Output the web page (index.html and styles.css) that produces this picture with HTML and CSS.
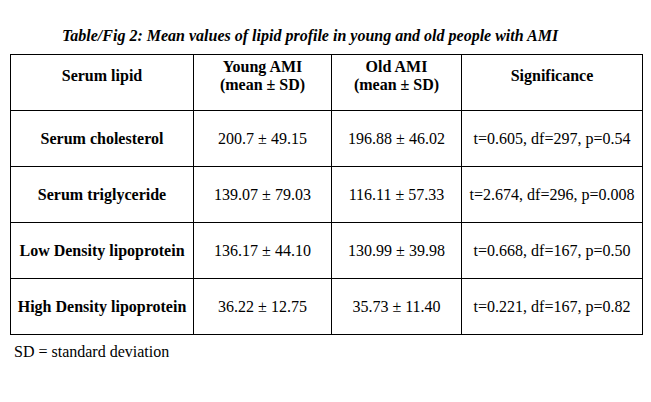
FILE: index.html
```html
<!DOCTYPE html>
<html>
<head>
<meta charset="utf-8">
<link rel="stylesheet" href="styles.css">
</head>
<body>
<div class="page">
  <p class="caption">Table/Fig 2: Mean values of lipid profile in young and old people with AMI</p>
  <table class="lipid">
    <colgroup>
      <col class="c1"><col class="c2"><col class="c3"><col class="c4">
    </colgroup>
    <thead>
      <tr>
        <th>Serum lipid</th>
        <th>Young AMI<br>(mean ± SD)</th>
        <th>Old AMI<br>(mean ± SD)</th>
        <th>Significance</th>
      </tr>
    </thead>
    <tbody>
      <tr>
        <th>Serum cholesterol</th>
        <td>200.7 ± 49.15</td>
        <td>196.88 ± 46.02</td>
        <td>t=0.605, df=297, p=0.54</td>
      </tr>
      <tr>
        <th>Serum triglyceride</th>
        <td>139.07 ± 79.03</td>
        <td>116.11 ± 57.33</td>
        <td>t=2.674, df=296, p=0.008</td>
      </tr>
      <tr>
        <th>Low Density lipoprotein</th>
        <td>136.17 ± 44.10</td>
        <td>130.99 ± 39.98</td>
        <td>t=0.668, df=167, p=0.50</td>
      </tr>
      <tr>
        <th>High Density lipoprotein</th>
        <td>36.22 ± 12.75</td>
        <td>35.73 ± 11.40</td>
        <td>t=0.221, df=167, p=0.82</td>
      </tr>
    </tbody>
  </table>
  <p class="note">SD = standard deviation</p>
</div>
</body>
</html>
```
FILE: styles.css
```css
html, body {
  margin: 0;
  padding: 0;
  background: #ffffff;
}
.page {
  font-family: "Liberation Serif", "Times New Roman", serif;
  font-size: 16px;
  color: #000;
  padding: 26px 0 0 10px;
}
.caption {
  margin: 0 0 10px 52px;
  font-weight: bold;
  font-style: italic;
  line-height: 19px;
  height: 18px;
}
.lipid {
  border-collapse: collapse;
  table-layout: fixed;
  width: 632px;
}
.c1 { width: 183px; }
.c2 { width: 138px; }
.c3 { width: 130px; }
.c4 { width: 181px; }
.lipid th, .lipid td {
  border: 1px solid #000;
  text-align: center;
  vertical-align: middle;
  padding: 0;
  height: 55px;
  line-height: 18px;
  white-space: nowrap;
}
.lipid th {
  font-weight: bold;
}
.lipid td {
  font-weight: normal;
}
.lipid thead th {
  padding-bottom: 14px;
  height: 41px;
}
.note {
  margin: 8px 0 0 4px;
  line-height: 18px;
}
```
